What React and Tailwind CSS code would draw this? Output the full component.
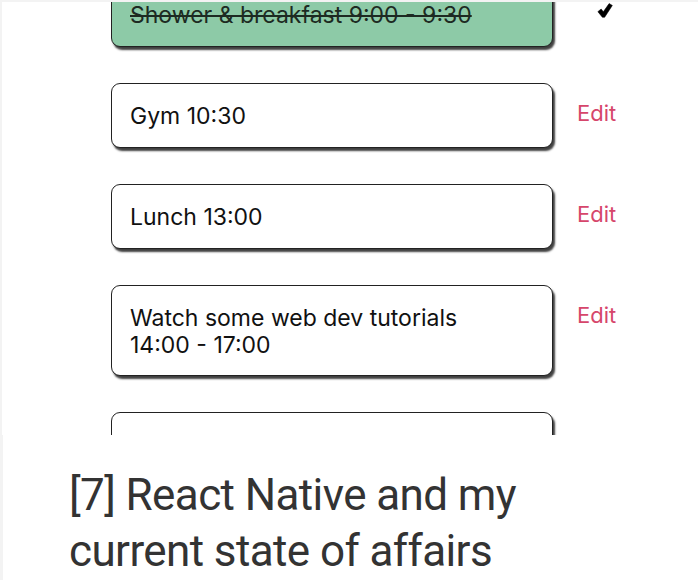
import React from "react";

const tasks = [
  { id: 1, text: ["Shower & breakfast 9:00 - 9:30"], done: true },
  { id: 2, text: ["Gym 10:30"] },
  { id: 3, text: ["Lunch 13:00"] },
  { id: 4, text: ["Watch some web dev tutorials", "14:00 - 17:00"] },
  { id: 5, text: [], cut: true },
];

const Check = () => (
  <svg width="16" height="15" viewBox="0 0 16 16" className="ml-[20px] mt-[21px]">
    <path
      d="M0.4 9.2 L3.9 6.4 L6.2 9.4 L12.4 0.6 L15.8 2.6 L7.6 15.2 L5.2 15.2 Z"
      fill="#000"
      stroke="#000"
      strokeWidth="0.6"
      strokeLinejoin="round"
    />
  </svg>
);

const TaskRow = ({ task }) => (
  <div className="flex items-start">
    <div
      className={`w-[442px] min-h-[65px] rounded-[9px] border-[1.5px] border-[#222] pl-[18px] pr-4 text-[23px] shadow-[2px_3px_2px_rgba(0,0,0,0.75)] ${
        task.done
          ? "bg-[#8dcaa7] text-[#1d2a22] line-through pt-[21px] pb-[19px] leading-[22px]"
          : "bg-white text-[#111] pt-[19px] pb-[16px] leading-[27px]"
      }`}
    >
      {task.text.map((line, i) => (
        <div key={i}>{line}</div>
      ))}
    </div>
    {!task.cut && (
      <div className="w-[80px] pl-[24px]">
        {task.done ? (
          <Check />
        ) : (
          <div className="pt-[16px] text-[22px] leading-[29px] text-[#d6466b]">Edit</div>
        )}
      </div>
    )}
  </div>
);

export default function App() {
  return (
    <div className="w-[698px] h-[580px] overflow-hidden bg-[#f3f3f3]">
      <div className="h-[433px] ml-[2px] mt-[2px] overflow-hidden bg-white">
        <div
          className="flex flex-col gap-[36px] pl-[109px] -mt-[20px]"
          style={{ fontFamily: "Inter, 'Liberation Sans', sans-serif" }}
        >
          {tasks.map((task) => (
            <TaskRow key={task.id} task={task} />
          ))}
        </div>
      </div>
      <div className="h-[145px] ml-[3px] bg-white pl-[66px] pt-[32px]">
        <h2
          className="text-[44px] leading-[56px] text-[#333] font-normal tracking-[-0.6px]"
          style={{ fontFamily: "Roboto, 'Liberation Sans', sans-serif" }}
        >
          [7] React Native and my
          <br />
          current state of affairs
        </h2>
      </div>
    </div>
  );
}
